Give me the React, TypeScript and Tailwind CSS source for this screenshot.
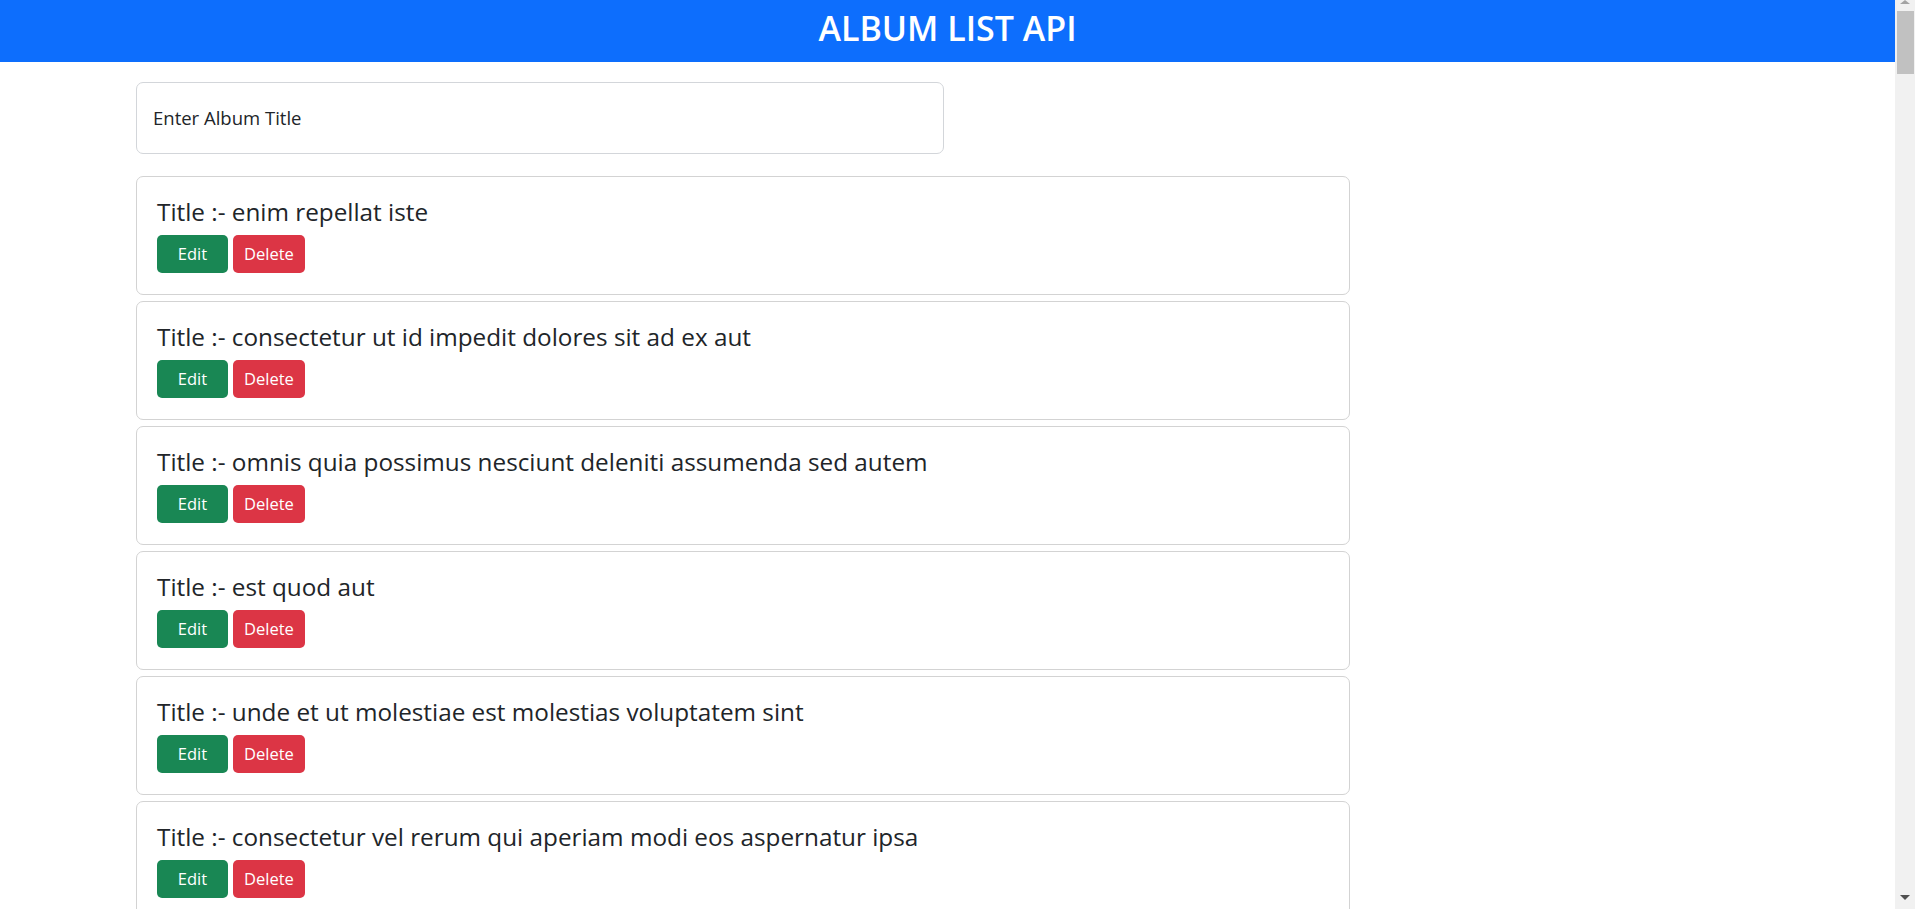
import React from "react";

const titles = [
  "enim repellat iste",
  "consectetur ut id impedit dolores sit ad ex aut",
  "omnis quia possimus nesciunt deleniti assumenda sed autem",
  "est quod aut",
  "unde et ut molestiae est molestias voluptatem sint",
  "consectetur vel rerum qui aperiam modi eos aspernatur ipsa",
  "itaque sed ut",
  "non esse culpa molestiae omnis sed optio",
];

function Scrollbar() {
  return (
    <div className="w-[20px] h-full bg-[#f1f1f1] flex flex-col items-center shrink-0">
      <div className="h-[11px] w-full flex justify-center items-start">
        <div className="w-0 h-0 border-x-[5px] border-x-transparent border-b-[4px] border-b-[#a3a3a3]" />
      </div>
      <div className="w-[17px] h-[63px] bg-[#c1c1c1]" />
      <div className="flex-1" />
      <div className="h-[14px] w-full flex justify-center items-start">
        <div className="w-0 h-0 border-x-[5px] border-x-transparent border-t-[5px] border-t-[#505050]" />
      </div>
    </div>
  );
}

export default function App() {
  return (
    <div
      className="h-screen w-full flex overflow-hidden bg-white text-[#212529]"
      style={{ fontFamily: '"Open Sans", "Noto Sans", sans-serif' }}
    >
      <div className="flex-1 min-w-0 h-full overflow-hidden">
        <header className="h-[62px] bg-[#0d6efd] flex justify-center">
          <h1 className="text-white text-[34px] font-semibold leading-[56px]">ALBUM LIST API</h1>
        </header>
        <main className="pl-[136px] pt-[20px] pb-10">
          <div className="w-[808px] h-[72px] border border-[#d3d6da] rounded-[7px] flex items-center px-4 text-[18.5px] text-[#212529]">
            Enter Album Title
          </div>
          <div className="mt-[22px] w-[1214px] flex flex-col gap-[6px]">
            {titles.map((t, i) => (
              <div key={i} className="border border-[#d3d3d3] rounded-[7px] px-5 pt-5 pb-5 h-[119px]">
                <h4 className="text-[24.3px] font-medium leading-[29px] mb-[9px]">Title :- {t}</h4>
                <div className="flex gap-[5px]">
                  <button className="w-[71px] h-[38px] rounded-[5px] bg-[#198754] text-white text-[16.5px]">Edit</button>
                  <button className="h-[38px] px-[11px] rounded-[5px] bg-[#dc3545] text-white text-[16.5px]">Delete</button>
                </div>
              </div>
            ))}
          </div>
        </main>
      </div>
      <Scrollbar />
    </div>
  );
}
